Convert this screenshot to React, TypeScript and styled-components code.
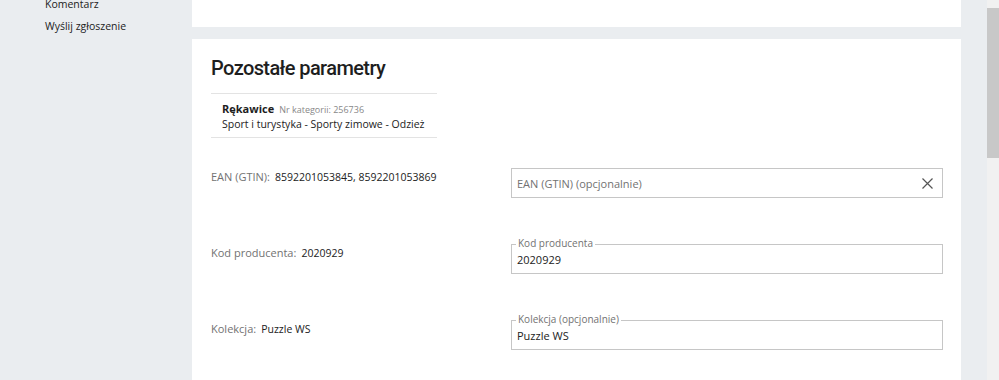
import React from 'react';
import styled, { createGlobalStyle } from 'styled-components';

const GlobalStyle = createGlobalStyle`
  html, body {
    margin: 0;
    padding: 0;
    background: #eaedf0;
    font-family: "Open Sans", "Liberation Sans", sans-serif;
    color: #222;
  }
  * {
    box-sizing: border-box;
  }
`;

const Page = styled.div`
  display: flex;
  width: 999px;
  height: 380px;
  overflow: hidden;
  background: #eaedf0;
`;

const Sidebar = styled.nav`
  width: 192px;
  flex-shrink: 0;
  display: flex;
  flex-direction: column;
  align-items: flex-start;
  padding-left: 45px;
  margin-top: -7px;
`;

const SideLink = styled.a`
  font-size: 10.5px;
  line-height: 22px;
  color: #222;
  text-decoration: none;
`;

const Main = styled.main`
  width: 769px;
  flex-shrink: 0;
  display: flex;
  flex-direction: column;
  gap: 12px;
`;

const TopCard = styled.div`
  height: 27px;
  background: #fff;
`;

const Card = styled.section`
  flex: 1;
  background: #fff;
  padding: 17px 18px 0 19px;
`;

const Title = styled.h2`
  margin: 0;
  font-family: Roboto, "Liberation Sans", sans-serif;
  font-weight: 500;
  font-size: 20px;
  line-height: 24px;
  letter-spacing: -0.6px;
  color: #1e1e1e;
`;

const CategoryBox = styled.div`
  width: 226px;
  margin-top: 13px;
  padding: 7px 11px 5px;
  border-top: 1px solid #e3e3e3;
  border-bottom: 1px solid #e3e3e3;
`;

const CategoryName = styled.div`
  font-size: 11px;
  line-height: 15px;
  font-weight: 700;
  color: #1e1e1e;
`;

const CategoryId = styled.span`
  margin-left: 5px;
  font-size: 9px;
  font-weight: 400;
  color: #888;
`;

const CategoryPath = styled.div`
  font-size: 10.5px;
  line-height: 15px;
  color: #222;
  white-space: nowrap;
`;

const Rows = styled.div`
  display: flex;
  flex-direction: column;
  gap: 46px;
  margin-top: 30px;
`;

const Row = styled.div`
  display: grid;
  grid-template-columns: 300px 432px;
  align-items: start;
`;

const Param = styled.div`
  padding-top: 1px;
  font-size: 11px;
  line-height: 15px;
`;

const ParamLabel = styled.span`
  color: #727272;
  margin-right: 5px;
`;

const ParamValue = styled.span`
  font-size: 10.5px;
  color: #222;
`;

const Field = styled.div`
  position: relative;
  height: 30px;
  display: flex;
  align-items: center;
  padding: 0 6px 0 5px;
  border: 1px solid #c6c6c6;
  background: #fff;
`;

const FieldLegend = styled.span`
  position: absolute;
  top: -9px;
  left: 4px;
  padding: 0 2px;
  background: #fff;
  font-size: 10px;
  line-height: 14px;
  color: #727272;
`;

const FieldValue = styled.span<{ $placeholder?: boolean }>`
  flex: 1;
  font-size: 11px;
  color: ${(p) => (p.$placeholder ? '#727272' : '#222')};
`;

const ClearButton = styled.button`
  display: flex;
  align-items: center;
  justify-content: center;
  width: 17px;
  height: 17px;
  padding: 0;
  border: none;
  background: none;
  cursor: pointer;
`;

const Scrollbar = styled.div`
  margin-left: 26px;
  width: 12px;
  flex-shrink: 0;
  background: #f1f1f1;
  padding-top: 8px;
`;

const Thumb = styled.div`
  width: 12px;
  height: 150px;
  background: #c8c8c8;
`;

const params = [
  {
    label: 'EAN (GTIN):',
    value: '8592201053845, 8592201053869',
    legend: '',
    field: 'EAN (GTIN) (opcjonalnie)',
    placeholder: true,
  },
  {
    label: 'Kod producenta:',
    value: '2020929',
    legend: 'Kod producenta',
    field: '2020929',
    placeholder: false,
  },
  {
    label: 'Kolekcja:',
    value: 'Puzzle WS',
    legend: 'Kolekcja (opcjonalnie)',
    field: 'Puzzle WS',
    placeholder: false,
  },
];

const App: React.FC = () => {
  return (
    <>
      <GlobalStyle />
      <Page>
        <Sidebar>
          <SideLink href="#">Komentarz</SideLink>
          <SideLink href="#">Wyślij zgłoszenie</SideLink>
        </Sidebar>
        <Main>
          <TopCard />
          <Card>
            <Title>Pozostałe parametry</Title>
            <CategoryBox>
              <CategoryName>
                Rękawice<CategoryId>Nr kategorii: 256736</CategoryId>
              </CategoryName>
              <CategoryPath>Sport i turystyka - Sporty zimowe - Odzież</CategoryPath>
            </CategoryBox>
            <Rows>
              {params.map((p) => (
                <Row key={p.label}>
                  <Param>
                    <ParamLabel>{p.label}</ParamLabel>
                    <ParamValue>{p.value}</ParamValue>
                  </Param>
                  <Field>
                    {p.legend && <FieldLegend>{p.legend}</FieldLegend>}
                    <FieldValue $placeholder={p.placeholder}>{p.field}</FieldValue>
                    {p.placeholder && (
                      <ClearButton aria-label="Wyczyść">
                        <svg width="11" height="11" viewBox="0 0 11 11">
                          <path d="M0.5 0.5L10.5 10.5M10.5 0.5L0.5 10.5" stroke="#555" strokeWidth="1.2" fill="none" />
                        </svg>
                      </ClearButton>
                    )}
                  </Field>
                </Row>
              ))}
            </Rows>
          </Card>
        </Main>
        <Scrollbar>
          <Thumb />
        </Scrollbar>
      </Page>
    </>
  );
};

export default App;
